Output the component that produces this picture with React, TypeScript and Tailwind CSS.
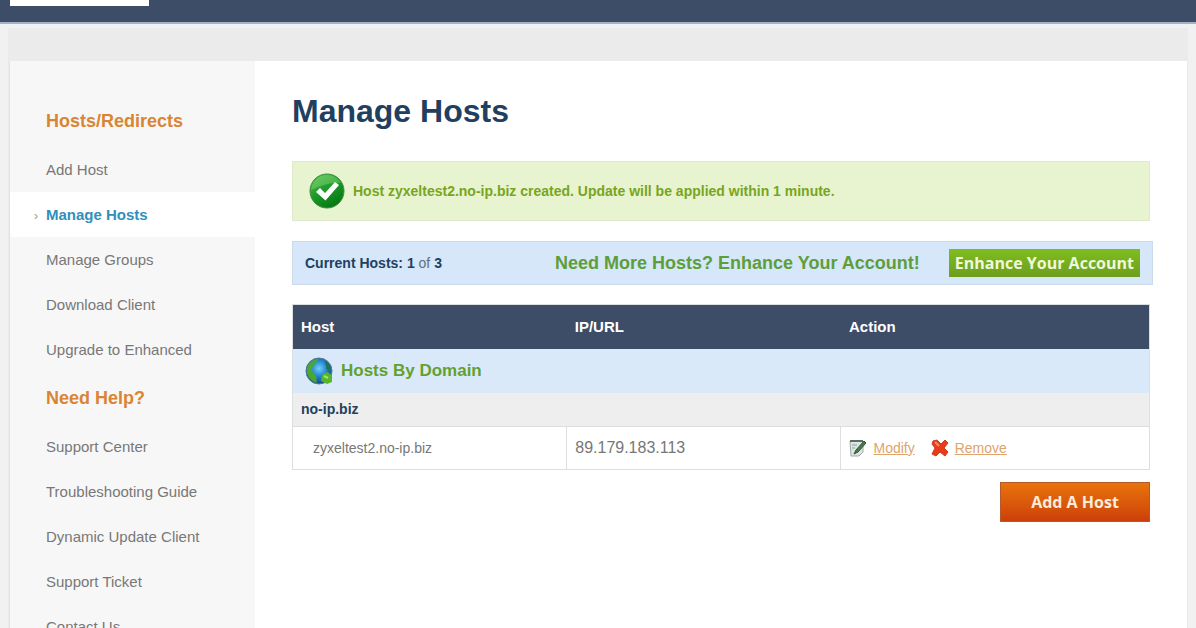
interface NavItem {
    label: string
    active?: boolean
}

const hostLinks: NavItem[] = [
    { label: 'Add Host' },
    { label: 'Manage Hosts', active: true },
    { label: 'Manage Groups' },
    { label: 'Download Client' },
    { label: 'Upgrade to Enhanced' },
]

const helpLinks: NavItem[] = [
    { label: 'Support Center' },
    { label: 'Troubleshooting Guide' },
    { label: 'Dynamic Update Client' },
    { label: 'Support Ticket' },
    { label: 'Contact Us' },
]

const hosts = [{ name: 'zyxeltest2.no-ip.biz', ip: '89.179.183.113' }]

const CheckIcon = () => (
    <svg className="h-9 w-9 shrink-0" viewBox="0 0 36 36" aria-hidden="true">
        <defs>
            <linearGradient id="checkFill" x1="0" y1="0" x2="0.6" y2="1">
                <stop offset="0" stopColor="#5cc653" />
                <stop offset="0.5" stopColor="#219b2b" />
                <stop offset="1" stopColor="#057a12" />
            </linearGradient>
        </defs>
        <circle cx="18" cy="18" r="17" fill="url(#checkFill)" stroke="#3c8f3f" />
        <path d="M2 17C3 8 10 2 18 2c6 0 11 3 14 8-9-1-19 2-30 7z" fill="#8fdc82" opacity="0.4" />
        <path d="M7 19l4-4 5 5L26 9l4 3-13.500 15.500z" fill="#fff" />
    </svg>
)

const GlobeIcon = () => (
    <svg className="h-7 w-7 shrink-0" viewBox="0 0 28 28" aria-hidden="true">
        <defs>
            <radialGradient id="globeFill" cx="0.5" cy="0.4" r="0.65">
                <stop offset="0" stopColor="#6fd0f8" />
                <stop offset="0.5" stopColor="#1f7fcf" />
                <stop offset="1" stopColor="#123f78" />
            </radialGradient>
        </defs>
        <circle cx="14" cy="14" r="13" fill="url(#globeFill)" stroke="#4d7d8c" />
        <path d="M3 8c3-4 6-6 10-6 0 2-2 3-3 5s-3 2-3 5 3 4 4 7 0 5 1 7C5 24 1 18 2 12z" fill="#4aa637" />
        <path d="M20 4c3 2 5 4 6 7l-2 4-3-4c1-3-2-4-1-7z" fill="#25705c" />
        <path d="M17 18l5-3 5 3v7l-5 2-6-3z" fill="#56b52a" />
        <path d="M19 19l4 2" stroke="#a5e26b" strokeWidth="2" fill="none" />
    </svg>
)

const ModifyIcon = () => (
    <svg className="h-[18px] w-[18px] shrink-0" viewBox="0 0 18 18" aria-hidden="true">
        <path d="M1 2h13v11l-4 4H2z" fill="#dce5e2" stroke="#9caaa7" />
        <path d="M1 2h13" stroke="#557064" strokeWidth="2" />
        <path d="M3 6h5M3 9h3" stroke="#8ea39b" />
        <path d="M15 2l2 2-8 9-4 2 2-4z" fill="#4a7a49" stroke="#35513c" />
    </svg>
)

const RemoveIcon = () => (
    <svg className="h-[18px] w-[18px] shrink-0" viewBox="0 0 18 18" aria-hidden="true">
        <path d="M2 2l4-1 4 4 4-4 3 3-4 5 4 4-3 4-5-4-4 4-4-2 3-6-3-4z" fill="#ea3a1c" stroke="#c93d25" />
        <path d="M4 3l4 4" stroke="#ff8a66" strokeWidth="2" />
    </svg>
)

const SideNav = ({ title, items }: { title: string; items: NavItem[] }) => (
    <nav aria-label={title}>
        <h2 className="flex h-[52px] items-center pl-9 text-lg font-bold text-[#d98534]">{title}</h2>
        <ul>
            {items.map((item) => (
                <li key={item.label}>
                    {item.active ? (
                        <a href="#" aria-current="page" className="flex h-[45px] items-center bg-white pt-0.5 pl-6 font-bold text-[#2f8fbd]">
                            <span className="w-3 text-xs font-normal text-[#8c9aa3]">›</span>
                            {item.label}
                        </a>
                    ) : (
                        <a href="#" className="flex h-[45px] items-center pt-0.5 pl-9 text-[#777]">{item.label}</a>
                    )}
                </li>
            ))}
        </ul>
    </nav>
)

const App = () => {
    return (
        <div className="min-h-screen bg-[#ebebeb] font-['Liberation_Sans',Arial,sans-serif] text-[15px] text-[#777]">
            <header className="h-6 border-b-2 border-[#a9b2c0] bg-[#3d4d68] px-[10px]">
                <div className="h-[6px] w-[139px] bg-white"></div>
            </header>
            <div className="border-x-8 border-t-4 border-x-[#f1f1f1] border-t-[#eef2f7] px-px pt-[33px]">
                <div className="flex border-l border-[#e2e2e2] bg-white">
                    <aside className="w-[245px] shrink-0 bg-[#f7f7f7] pt-[34px]">
                        <SideNav title="Hosts/Redirects" items={hostLinks} />
                        <SideNav title="Need Help?" items={helpLinks} />
                    </aside>
                    <main className="min-w-0 flex-1 px-[37px] pt-8">
                        <h1 className="text-[32px] leading-9 font-bold text-[#21405f]">Manage Hosts</h1>

                        <div role="status" className="mt-8 flex h-[60px] items-center gap-2 border border-[#dfe9cc] bg-[#e8f4cf] px-4 text-sm font-bold text-[#78a521]">
                            <CheckIcon />
                            <p>Host zyxeltest2.no-ip.biz created. Update will be applied within 1 minute.</p>
                        </div>

                        <div className="mt-5 -mr-[3px] flex h-11 items-center border border-[#cbdbea] bg-[#d5e7f9] px-3 text-[#21405f]">
                            <p className="w-[250px] text-sm font-bold">
                                Current Hosts: 1 <span className="font-normal text-[#5d6f80]">of</span> 3
                            </p>
                            <p className="text-lg font-bold text-[#5e9e3a]">Need More Hosts? Enhance Your Account!</p>
                            <button className="ml-auto h-7 bg-linear-to-b from-[#7fbd20] to-[#6d9e1e] px-1.5 font-['Open_Sans',sans-serif] text-base font-bold text-[#f0f8dc]">
                                Enhance Your Account
                            </button>
                        </div>

                        <table className="mt-[19px] w-full table-fixed border-collapse border border-[#dcdfe2] text-left">
                            <thead>
                                <tr className="h-11 bg-[#3d4d68] text-white">
                                    <th className="w-[32%] px-2">Host</th>
                                    <th className="w-[32%] px-2">IP/URL</th>
                                    <th className="px-2">Action</th>
                                </tr>
                            </thead>
                            <tbody>
                                <tr className="h-11 bg-[#d9e9fa]">
                                    <th colSpan={3} className="px-3">
                                        <span className="flex items-center gap-2 text-[17px] text-[#64a02c]">
                                            <GlobeIcon />
                                            Hosts By Domain
                                        </span>
                                    </th>
                                </tr>
                                <tr className="h-[34px] bg-[#eee]">
                                    <th colSpan={3} className="px-2 text-sm text-[#21405f]">no-ip.biz</th>
                                </tr>
                                {hosts.map((host) => (
                                    <tr key={host.name} className="h-[43px]">
                                        <td className="border border-[#dcdfe2] px-5 text-sm">{host.name}</td>
                                        <td className="border border-[#dcdfe2] px-2 text-base">{host.ip}</td>
                                        <td className="border border-[#dcdfe2] px-2">
                                            <div className="flex items-center gap-4 text-sm text-[#dfa36c]">
                                                <a href="#" className="flex items-center gap-1.5 underline">
                                                    <ModifyIcon />
                                                    Modify
                                                </a>
                                                <a href="#" className="flex items-center gap-1.5 underline">
                                                    <RemoveIcon />
                                                    Remove
                                                </a>
                                            </div>
                                        </td>
                                    </tr>
                                ))}
                            </tbody>
                        </table>

                        <div className="mt-3 flex justify-end">
                            <button className="h-10 w-[150px] border border-[#b75a2b] bg-linear-to-b from-[#e8730c] to-[#cd3f09] font-['Open_Sans',sans-serif] text-base font-bold text-[#fdebd9]">
                                Add A Host
                            </button>
                        </div>
                    </main>
                </div>
            </div>
        </div>
    )
}

export default App
